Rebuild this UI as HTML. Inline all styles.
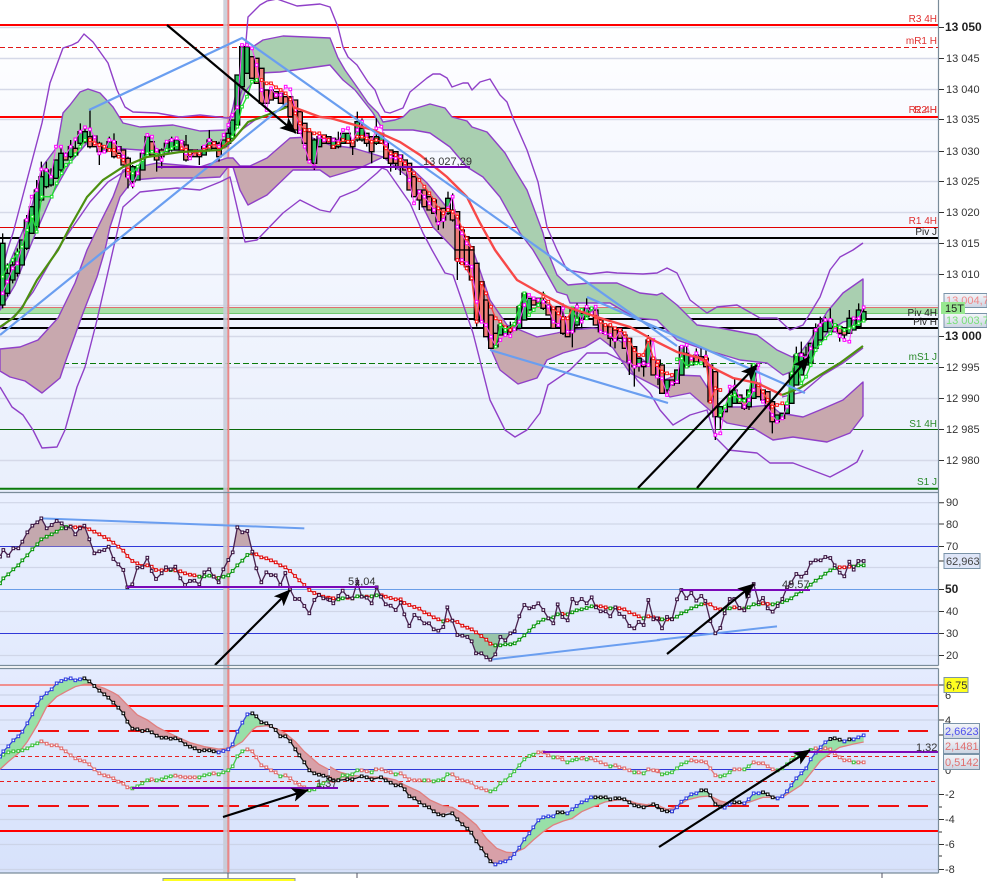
<!DOCTYPE html>
<html><head><meta charset="utf-8">
<style>
html,body{margin:0;padding:0;background:#fff}
svg{display:block;font-family:"Liberation Sans",sans-serif}
.s{fill:none;stroke-width:4;stroke-linejoin:round}
.k{stroke:#151515;marker:url(#mk)}
.b{stroke:#3a48d8;marker:url(#mb)}
.pk{stroke:#e47878;marker:url(#mp)}
.gg{stroke:#48c848;marker:url(#mg)}
.dk{stroke:#4a2450;marker:url(#md)}
.rd{stroke:#e01818;marker:url(#mr)}
.gn{stroke:#10a018;marker:url(#mn)}
.mg{stroke:#ff30ff;marker:url(#mm)}
.r1{stroke:#ff4040;marker:url(#mr1)}
.g1{stroke:#20e030;marker:url(#mg1)}
.w{fill:none;stroke:#000;stroke-width:4}
.cg{fill:#30c060;stroke:#000;stroke-width:4}
.cr{fill:#f07c78;stroke:#000;stroke-width:4}
.t{font-size:11px;fill:#333}
.tb{font-size:12px;font-weight:700;fill:#222}
.l{font-size:10px;text-anchor:end}
</style></head><body>
<svg width="987" height="881" viewBox="0 0 987 881" xmlns="http://www.w3.org/2000/svg">
<defs>
<linearGradient id="g1" x1="0" y1="0" x2="0" y2="1"><stop offset="0" stop-color="#fff"/><stop offset=".05" stop-color="#fff"/><stop offset=".3" stop-color="#f7f9ff"/><stop offset="1" stop-color="#e9effc"/></linearGradient>
<linearGradient id="g2" x1="0" y1="0" x2="0" y2="1"><stop offset="0" stop-color="#eaf0ff"/><stop offset="1" stop-color="#e2eafd"/></linearGradient>
<linearGradient id="g3" x1="0" y1="0" x2="0" y2="1"><stop offset="0" stop-color="#e4ebfe"/><stop offset="1" stop-color="#d7e2fb"/></linearGradient>
<linearGradient id="gb" x1="0" y1="0" x2="0" y2="1"><stop offset="0" stop-color="#f4f6fa"/><stop offset="1" stop-color="#ccd4e2"/></linearGradient>
<marker id="mk" markerUnits="userSpaceOnUse" markerWidth="12" markerHeight="12" refX="6" refY="6"><rect x="2" y="2" width="8" height="8" fill="#fff" stroke="#000" stroke-width="3"/></marker>
<marker id="mb" markerUnits="userSpaceOnUse" markerWidth="12" markerHeight="12" refX="6" refY="6"><rect x="2" y="2" width="8" height="8" fill="#fff" stroke="#2a38e0" stroke-width="3"/></marker>
<marker id="mp" markerUnits="userSpaceOnUse" markerWidth="12" markerHeight="12" refX="6" refY="6"><rect x="2" y="2" width="8" height="8" fill="#fff" stroke="#e06868" stroke-width="3"/></marker>
<marker id="mg" markerUnits="userSpaceOnUse" markerWidth="12" markerHeight="12" refX="6" refY="6"><rect x="2" y="2" width="8" height="8" fill="#fff" stroke="#38c038" stroke-width="3"/></marker>
<marker id="md" markerUnits="userSpaceOnUse" markerWidth="12" markerHeight="12" refX="6" refY="6"><rect x="2" y="2" width="8" height="8" fill="#fff" stroke="#300838" stroke-width="3"/></marker>
<marker id="mr" markerUnits="userSpaceOnUse" markerWidth="12" markerHeight="12" refX="6" refY="6"><rect x="2" y="2" width="8" height="8" fill="#fff" stroke="#e00000" stroke-width="3"/></marker>
<marker id="mn" markerUnits="userSpaceOnUse" markerWidth="12" markerHeight="12" refX="6" refY="6"><rect x="2" y="2" width="8" height="8" fill="#fff" stroke="#009000" stroke-width="3"/></marker>
<marker id="mm" markerUnits="userSpaceOnUse" markerWidth="12" markerHeight="12" refX="6" refY="6"><rect x="2" y="2" width="8" height="8" fill="#fff" stroke="#ff00ff" stroke-width="3"/></marker>
<marker id="mr1" markerUnits="userSpaceOnUse" markerWidth="12" markerHeight="12" refX="6" refY="6"><rect x="2" y="2" width="8" height="8" fill="#fff" stroke="#ff1010" stroke-width="3"/></marker>
<marker id="mg1" markerUnits="userSpaceOnUse" markerWidth="12" markerHeight="12" refX="6" refY="6"><rect x="2" y="2" width="8" height="8" fill="#fff" stroke="#10e020" stroke-width="3"/></marker>
<marker id="ah" markerUnits="userSpaceOnUse" markerWidth="18" markerHeight="14" refX="16" refY="7" orient="auto"><path d="M0 0L17 7L0 14L4 7z" fill="#000"/></marker>
<clipPath id="c1"><rect x="0" y="0" width="938" height="492"/></clipPath>
<clipPath id="c2"><rect x="0" y="493" width="938" height="172"/></clipPath>
<clipPath id="c3"><rect x="0" y="669" width="938" height="204"/></clipPath>
</defs>

<!-- panels -->
<rect x="0" y="0" width="938" height="492" fill="url(#g1)"/>
<rect x="0" y="493" width="938" height="172" fill="url(#g2)"/>
<rect x="0" y="669" width="938" height="204" fill="url(#g3)"/>

<!-- PANEL 1 -->
<g clip-path="url(#c1)">
<path d="M0 27.5H938M0 58.5H938M0 89.5H938M0 119.5H938M0 151.5H938M0 181.5H938M0 212.5H938M0 243.5H938M0 274.5H938M0 305.5H938M0 336.5H938M0 367.5H938M0 398.5H938M0 460.5H938" stroke="#d5d9e8" stroke-width="1.4" fill="none"/>
<rect x="0" y="308" width="938" height="5.5" fill="#a8e0a8"/>
<path d="M0 307.5H938" stroke="#e07070" stroke-width="1"/>
<path d="M0 313.5H938" stroke="#70c870" stroke-width="1"/>
<path d="M0 25H938" stroke="#ff0000" stroke-width="2"/>
<path d="M0 47.5H938" stroke="#e01818" stroke-width="1" stroke-dasharray="5 3"/>
<path d="M0 117H938" stroke="#ff0000" stroke-width="2"/>
<path d="M0 227.5H938" stroke="#e00000" stroke-width="1"/>
<path d="M0 238H938M0 319H938M0 328H938" stroke="#000" stroke-width="2"/>
<path d="M0 363.5H938" stroke="#0a7a0a" stroke-width="1" stroke-dasharray="6 3"/>
<path d="M0 429.5H938" stroke="#0a6a0a" stroke-width="1"/>
<path d="M0 488.7H938" stroke="#0a7a0a" stroke-width="2"/>
</g>

<!-- vertical marker -->
<rect x="223.3" y="0" width="4" height="873" fill="#c8ccd8" opacity=".9"/>
<rect x="227.3" y="0" width="2" height="873" fill="#e88888"/>

<g clip-path="url(#c1)">
<!-- bands -->
<polygon fill="#a9cfb0" stroke="#9040c8" stroke-width="1.4" stroke-linejoin="round" points="0,285 15,250 30,213 42,167 57,147 63,113 70,105 80,92 88,89 100,93 113,107 123,123 140,127 173,125 200,131 227,130 230,118 233,107 238,83 248,50 263,40 283,36 330,38 338,58 345,70 357,87 368,103 378,113 383,122 395,120 403,117 410,110 430,104 445,108 452,117 467,121 472,127 487,132 505,153 513,167 527,190 543,233 547,250 557,275 568,285 590,283 617,283 640,293 657,295 662,293 677,305 697,325 720,328 757,335 777,350 792,357 800,353 810,340 827,312 843,293 863,279 863,318 843,322 827,333 813,353 803,367 783,375 767,363 740,360 700,348 677,340 657,320 637,318 627,313 610,303 570,303 567,295 557,292 543,267 533,250 520,233 500,197 483,177 467,167 450,147 430,133 413,130 383,130 373,113 355,90 343,80 330,65 280,72 260,73 245,92 233,125 227,143 200,150 140,150 100,147 87,143 70,163 53,193 37,230 30,247 15,285 0,310"/>
<polygon fill="#c8a8ae" stroke="#9040c8" stroke-width="1.4" stroke-linejoin="round" points="0,349 20,347 38,340 58,318 75,283 87,250 100,223 113,197 123,170 157,163 200,167 227,158 233,158 240,166 250,166 267,158 290,138 310,137 330,145 353,148 383,157 410,167 427,183 457,220 473,250 490,300 507,325 520,330 537,337 557,333 570,330 593,328 607,330 627,347 647,363 664,380 677,375 700,376 720,407 750,407 770,405 780,413 803,417 820,410 843,400 863,382 863,416 850,433 827,442 793,437 773,440 753,428 727,423 713,413 690,393 670,397 657,387 630,373 613,348 600,338 585,347 563,353 547,360 537,378 518,384 500,370 490,347 473,280 455,250 433,227 408,177 383,157 360,168 330,177 320,170 293,170 267,195 248,205 240,190 233,167 228,167 220,177 200,178 157,178 133,180 120,197 110,227 105,250 97,277 83,313 65,363 60,378 42,393 25,381 10,377 0,371"/>
<!-- outer bands -->
<polyline fill="none" stroke="#9040c8" stroke-width="1.4" stroke-linejoin="round" points="0,278 8,248 13,233 42,123 50,83 63,48 72,45 78,42 84,34 93,42 108,63 117,90 125,107 133,112 157,113 180,117 200,115 227,118 233,117 242,90 248,17 260,5 267,1 277,-1 297,6 320,4 330,7 338,27 343,47 348,57 357,65 368,82 375,90 380,103 385,112 390,113 403,108 410,92 427,78 433,74 440,74 447,78 452,87 463,83 468,83 472,90 480,82 490,79 500,95 507,102 513,118 527,150 538,182 547,227 557,250 567,270 590,274 607,272 617,273 643,274 657,273 667,268 677,273 690,300 707,313 717,307 737,305 760,318 777,318 790,330 803,325 820,297 830,270 840,257 853,250 863,243"/>
<polyline fill="none" stroke="#9040c8" stroke-width="1.4" stroke-linejoin="round" points="0,387 12,407 23,415 33,430 42,448 57,447 65,430 77,387 85,367 97,320 113,250 123,207 140,192 177,188 200,190 220,182 230,177 237,207 245,242 257,240 283,213 300,200 320,210 330,212 340,197 357,190 377,173 382,168 387,170 410,203 423,233 432,250 445,273 453,275 473,333 490,400 505,430 515,437 527,430 540,413 548,385 570,370 587,353 607,353 627,363 637,380 650,393 660,410 673,425 690,415 707,410 715,437 728,450 757,453 770,463 793,463 830,477 847,468 857,462 863,450"/>
<polyline fill="none" stroke="#9040c8" stroke-width="1.4" stroke-linejoin="round" points="0,329 17,313 33,292 57,250 72,228 90,202 108,182 125,171" />
<polyline fill="none" stroke="#9040c8" stroke-width="1.4" stroke-linejoin="round" points="227,147 240,131 255,120 285,108" />
<polyline fill="none" stroke="#9040c8" stroke-width="1.4" stroke-linejoin="round" points="782,397 790,395 803,392 823,375 843,363 863,348" />
</g>

<g clip-path="url(#c1)">
<!-- candles tile 1 -->
<g transform="scale(.33333)">
<path class="w" d="M8 700V925M22 790V890M38 775V850M52 745V830M80 645V750M110 540V690M124 485V605M139 485V565M153 505V560M183 440V515M212 420V475M226 420V470M241 370V435M255 378V430M270 330V445M298 425V495M328 410V455M342 400V475M384 470V565M398 495V565M442 400V465M470 445V515M485 445V505M515 410V455M558 405V485M598 450V495M628 390V455M657 425V485M685 385V435M943 415V510"/>
<path class="cg" d="M1 730h14V915h-14zM15 820h14V880h-14zM31 795h14V840h-14zM45 760h14V820h-14zM59 720h14V795h-14zM73 660h14V745h-14zM88 620h14V700h-14zM103 570h14V680h-14zM117 530h14V600h-14zM132 510h14V560h-14zM146 530h14V555h-14zM161 480h14V535h-14zM176 460h14V510h-14zM205 440h14V470h-14zM234 395h14V430h-14zM248 395h14V425h-14zM306 440h14V455h-14zM321 425h14V450h-14zM391 500h14V545h-14zM406 500h14V540h-14zM421 460h14V510h-14zM435 410h14V460h-14zM493 430h14V455h-14zM508 420h14V450h-14zM523 420h14V450h-14zM605 440h14V465h-14zM621 420h14V450h-14zM664 420h14V440h-14zM678 400h14V430h-14zM690 360h14V415h-14zM705 225h14V375h-14zM719 140h14V260h-14zM734 140h14V220h-14zM936 420h14V490h-14zM951 410h14V440h-14z"/>
<path class="cr" d="M190 460h14V480h-14zM219 445h14V465h-14zM263 410h14V440h-14zM277 408h14V440h-14zM291 430h14V455h-14zM335 425h14V470h-14zM349 440h14V460h-14zM363 450h14V495h-14zM377 475h14V530h-14zM449 425h14V465h-14zM463 450h14V480h-14zM478 450h14V470h-14zM538 425h14V450h-14zM551 435h14V480h-14zM563 450h14V470h-14zM578 450h14V470h-14zM591 455h14V470h-14zM635 425h14V445h-14zM650 430h14V470h-14zM749 170h14V235h-14zM763 175h14V250h-14zM778 205h14V310h-14zM793 270h14V310h-14zM806 270h14V300h-14zM821 275h14V295h-14zM835 280h14V310h-14zM850 290h14V320h-14zM864 290h14V350h-14zM879 300h14V390h-14zM893 335h14V400h-14zM907 370h14V430h-14zM921 395h14V480h-14zM965 405h14V430h-14zM979 410h14V430h-14z"/>
<polyline fill="none" stroke="#ff40ff" stroke-width="3" style="marker:url(#mm)" points="8,880 22,845 38,805 52,790 66,740 80,660 95,590 110,570 124,508 139,510 153,530 168,440 183,440 197,465 212,440 226,418 241,395 255,382 270,388 284,412 298,460 313,455 328,420 342,425 356,445 370,470 384,530 398,555 413,520 428,455 442,405 456,410 470,450 485,480 500,425 515,420 530,415 545,425 558,460 570,475 585,455 598,460 612,440 628,420 642,430 657,440 671,405 685,375 697,345 712,322 726,135 741,135 756,145 770,195 785,270 800,330 813,265 828,285 842,285 857,260 871,268 886,330 900,395 914,440 928,485 943,500 958,410 972,420 986,420"/>
<polyline class="s g1" stroke-width="3" points="8,830 22,800 38,780 52,760 66,740 82,690 97,650 110,695 125,590 155,590 170,550 185,520 198,495 212,485 226,463 241,440 255,420"/>
<polyline class="s r1" points="270,420 284,430 298,435 313,440 328,450 342,450 356,470 370,480 384,510 398,520"/>
<polyline class="s g1" points="398,520 413,500 428,480 442,460 456,455 470,465 485,460 500,450 515,445 530,435"/>
<polyline class="s r1" points="545,445 558,450 570,460 585,455 598,460 612,450 628,440 642,430 657,450 671,440 685,420"/>
<polyline class="s g1" points="697,410 712,380 726,320 741,290 756,245 770,240"/>
<polyline class="s r1" points="785,240 800,250 813,250 828,262 842,270 857,280 871,298 886,340 900,370 914,390 928,390 943,400 958,400 972,410 986,420"/>
</g>
<!-- candles tile 2 -->
<g transform="translate(330,0) scale(.33333)">
<path class="w" d="M25 395V445M82 335V425M96 355V425M110 400V440M125 410V490M139 355V435M68 425V465M182 450V515M197 455V510M211 465V525M268 570V630M325 625V690M340 625V685M354 575V645M368 580V665"/>
<path class="cg" d="M3 415h14V445h-14zM18 420h14V440h-14zM32 400h14V430h-14zM47 400h14V430h-14zM75 365h14V420h-14zM89 385h14V420h-14zM132 410h14V430h-14zM147 400h14V430h-14zM347 595h14V640h-14z"/>
<path class="cr" d="M61 425h14V440h-14zM103 400h14V430h-14zM118 410h14V455h-14zM161 430h14V475h-14zM175 450h14V490h-14zM190 455h14V490h-14zM204 465h14V500h-14zM218 480h14V510h-14zM231 490h14V570h-14zM245 530h14V590h-14zM261 570h14V600h-14zM276 570h14V620h-14zM291 590h14V630h-14zM305 600h14V640h-14zM318 625h14V665h-14zM333 625h14V660h-14zM361 630h14V660h-14zM375 635h14V750h-14zM389 690h14V750h-14zM403 710h14V750h-14zM418 740h14V750h-14z"/>
<polyline fill="none" stroke="#ff40ff" stroke-width="3" style="marker:url(#mm)" points="10,420 25,425 39,390 54,385 68,425 82,390 96,365 110,410 125,425 139,385 154,380 168,430 182,470 197,475 211,470 225,490 238,540 252,610 268,575 283,590 298,610 312,630 325,670 340,660 354,625 368,590 382,680 396,700 410,730 425,745"/>
<polyline class="s r1" points="10,440 25,430 39,420 54,425 68,425 82,410 96,410 110,415 125,425 139,420 154,425 168,445 182,460 197,465 211,480 225,490 238,510 252,520 268,540 283,560 298,580 312,600 325,625 340,640 354,630 368,635 382,650 396,685 410,715 425,745"/>
</g>
<!-- candles tile 10 -->
<g transform="translate(330,250) scale(.33333)">
<path class="w" d="M382 0V90M440 40V230M541 215V250M640 125V180M699 160V255M727 175V292M741 160V230M755 190V235M770 145V205M841 230V290M855 240V295M898 265V375M913 290V410M927 325V365M941 335V380M955 255V350M984 330V405"/>
<path class="cg" d="M504 225h14V255h-14zM519 230h14V255h-14zM546 225h14V240h-14zM561 170h14V235h-14zM576 130h14V210h-14zM590 145h14V180h-14zM720 175h14V245h-14zM734 205h14V225h-14zM748 190h14V205h-14zM763 175h14V200h-14zM778 175h14V195h-14zM920 325h14V345h-14zM948 270h14V345h-14z"/>
<path class="cr" d="M375 0h14V30h-14zM389 0h14V40h-14zM403 0h14V50h-14zM418 0h14V90h-14zM433 40h14V210h-14zM448 95h14V215h-14zM461 150h14V260h-14zM476 195h14V295h-14zM490 250h14V290h-14zM534 235h14V245h-14zM604 150h14V165h-14zM618 145h14V160h-14zM633 155h14V175h-14zM648 165h14V195h-14zM663 175h14V235h-14zM678 170h14V225h-14zM692 200h14V250h-14zM706 205h14V260h-14zM790 180h14V225h-14zM805 210h14V245h-14zM819 225h14V250h-14zM834 230h14V265h-14zM848 240h14V270h-14zM863 240h14V265h-14zM877 255h14V295h-14zM891 265h14V335h-14zM906 290h14V350h-14zM934 335h14V350h-14zM963 325h14V375h-14zM977 330h14V380h-14z"/>
<polyline fill="none" stroke="#ff40ff" stroke-width="3" style="marker:url(#mm)" points="382,30 396,30 410,40 425,50 440,155 455,215 468,225 483,260 497,290 511,270 526,255 541,258 553,238 568,215 583,165 597,135 611,145 625,150 640,155 655,170 670,215 685,225 699,175 713,245 727,245 741,170 755,215 770,170 785,190 797,170 812,245 826,250 841,255 855,270 870,240 884,270 898,335 913,350 927,345 941,340 955,345 970,270 984,380"/>
<polyline class="s r1" points="382,30 396,40 410,55 425,85 440,215 455,100 468,130 483,170 497,205 511,215 526,232 541,240 553,222"/>
<polyline class="s g1" points="497,290 511,225 526,240 553,222 568,170 583,130 597,195 611,180 625,165 640,135"/>
<polyline class="s r1" points="640,140 655,155 670,175 685,190 699,205 713,205 727,175"/>
<polyline class="s g1" points="727,175 741,210 755,180 770,205 785,175"/>
<polyline class="s r1" points="797,200 812,215 826,225 841,225 855,235 870,240 884,250 898,270 913,300 927,315 940,315 955,270 970,325 984,335"/>
</g>
<!-- candles tile 3 -->
<g transform="translate(657,250) scale(.33333)">
<path class="w" d="M30 390V440M89 285V350M118 295V335M132 295V340M147 300V350M175 365V570M190 470V540M218 405V470M233 385V460M262 445V480M276 420V480M346 455V550M418 290V405M433 275V375M447 290V345M476 220V295M490 200V270M505 200V245M520 175V235M548 230V275M562 235V275M577 180V250M605 160V230M620 170V210"/>
<path class="cg" d="M23 390h14V420h-14zM53 360h14V400h-14zM67 290h14V375h-14zM82 310h14V350h-14zM183 470h14V500h-14zM197 470h14V485h-14zM211 440h14V470h-14zM226 420h14V460h-14zM269 420h14V470h-14zM283 345h14V445h-14zM353 495h14V515h-14zM369 490h14V505h-14zM383 465h14V490h-14zM397 370h14V460h-14zM411 315h14V405h-14zM426 310h14V375h-14zM440 315h14V345h-14zM454 280h14V340h-14zM469 240h14V295h-14zM483 225h14V270h-14zM498 210h14V245h-14zM513 210h14V235h-14zM570 205h14V250h-14zM583 210h14V240h-14zM598 180h14V230h-14zM613 185h14V210h-14z"/>
<path class="cr" d="M8 345h14V430h-14zM38 390h14V405h-14zM96 320h14V345h-14zM111 315h14V335h-14zM125 320h14V340h-14zM140 325h14V350h-14zM153 345h14V455h-14zM168 365h14V500h-14zM241 435h14V460h-14zM255 445h14V475h-14zM297 400h14V440h-14zM311 420h14V450h-14zM325 425h14V470h-14zM339 455h14V515h-14zM527 225h14V245h-14zM541 230h14V250h-14zM555 235h14V255h-14z"/>
<polyline fill="none" stroke="#ff40ff" stroke-width="3" style="marker:url(#mm)" points="0,380 15,385 30,435 45,400 60,395 74,290 89,285 103,325 118,310 132,335 147,320 160,350 175,555 190,550 204,475 218,410 233,410 248,445 262,470 276,450 290,420 304,345 318,455 332,470 346,495 360,515 376,505 390,470 404,370 418,315 433,315 447,325 461,295 476,240 490,225 505,210 520,210 534,240 548,258 562,270 577,275 590,205 605,205 620,172"/>
<polyline class="s r1" points="0,345 15,365 30,370 45,375"/>
<polyline class="s g1" points="60,328 74,325 89,350 103,340 118,340 132,340"/>
<polyline class="s r1" points="147,325 160,455 175,415 190,420"/>
<polyline class="s g1" points="190,495 204,470 218,440 233,435 248,450 262,452 276,430 290,345"/>
<polyline class="s r1" points="304,405 318,425 332,450 346,470 360,465 376,460"/>
<polyline class="s g1" points="390,460 404,370 418,315 433,400 447,380 461,345 476,300 490,280 505,265 520,250 534,225 548,232 562,240 577,235 590,230 605,220 620,212"/>
</g>
<!-- MAs -->
<polyline fill="none" stroke="#4c9010" stroke-width="2.2" points="0,327 13,318 22,308 37,280 58,250 70,227 87,197 103,180 123,167 147,157 180,152 220,150 233,140 248,122 267,115 287,107"/>
<polyline fill="none" stroke="#f84848" stroke-width="2.4" points="293,107 320,117 330,118 373,130 400,142 420,155 447,177 467,197 480,223 495,250 517,280 540,293 567,307 600,318 630,327 657,342 677,352 700,358 713,368 733,378 757,383 782,395"/>
<polyline fill="none" stroke="#4c9010" stroke-width="2.2" points="782,395 800,388 820,375 840,363 863,346"/>
<!-- Blue lines -->
<path fill="none" stroke="#6a9ef0" stroke-width="2.2" d="M0 335L287 103M89 110L242 38L677 346M587 297L805 393M490 350L668 403"/>
<!-- Purple -->
<path d="M157 167H470" stroke="#7a08b8" stroke-width="2" fill="none"/>
<text x="423" y="165" font-size="11" fill="#333">13 027,29</text>
<!-- Arrows -->
<line x1="167" y1="25" x2="296" y2="133" stroke="#000" stroke-width="2.2" marker-end="url(#ah)"/>
<line x1="638" y1="488" x2="757" y2="365" stroke="#000" stroke-width="2.2" marker-end="url(#ah)"/>
<line x1="697" y1="488" x2="809" y2="357" stroke="#000" stroke-width="2.2" marker-end="url(#ah)"/>
<!-- level labels -->
<text class="l" x="937" y="22" fill="#e03030">R3 4H</text>
<text class="l" x="937" y="44" fill="#e03030">mR1 H</text>
<text class="l" x="937" y="113" fill="#e03030">R2 4H</text>
<text class="l" x="937" y="113" fill="#e03030">R2 H</text>
<text class="l" x="937" y="224" fill="#e03030">R1 4H</text>
<text class="l" x="937" y="235" fill="#222">Piv J</text>
<text class="l" x="937" y="316" fill="#222">Piv 4H</text>
<text class="l" x="937" y="325" fill="#222">Piv H</text>
<text class="l" x="937" y="360" fill="#2a8a2a">mS1 J</text>
<text class="l" x="937" y="427" fill="#2a8a2a">S1 4H</text>
<text class="l" x="937" y="485" fill="#2a8a2a">S1 J</text>
</g>

<!-- PANEL 2 -->
<g clip-path="url(#c2)">
<path d="M0 502.7H938M0 524H938M0 567.5H938M0 611.5H938M0 655.5H938" stroke="#d0d6e8" stroke-width="1.2" fill="none"/>
<path d="M0 546.5H938M0 633.5H938" stroke="#3038d8" stroke-width="1" fill="none"/>
<path d="M0 589.5H938" stroke="#6a9ee8" stroke-width="1" fill="none"/>
<rect x="223.3" y="493" width="4" height="172" fill="#c8ccd8" opacity=".9"/>
<rect x="227.3" y="493" width="2" height="172" fill="#e88888"/>
<g transform="translate(0,490) scale(.33333)">
<polygon fill="#c4a8ae" points="60,169 67,155 82,127 97,107 112,97 124,85 140,115 155,105 170,93 185,100 198,115 212,110 226,133 240,115 253,107 268,148 274,169"/>
<polygon fill="#c4a8ae" points="700,169 712,112 727,127 742,123 752,169"/>
<path d="M124 85L913 115" stroke="#6a9ef0" stroke-width="6" fill="none"/>
<polyline class="s gn" points="0,280 10,265 25,253 40,238 55,226 67,211 82,196 97,178 112,163 124,148 140,140 155,133 170,125 185,115 198,111 212,109"/>
<polyline class="s rd" points="212,109 226,112 240,112 253,110 268,118 283,125 298,133 313,141 326,148 340,158 355,170 370,182 382,198 397,213 412,220 427,228 442,226 455,230 468,240 485,241 498,240 512,240"/>
<polyline class="s gn" points="512,240 526,241"/>
<polyline class="s rd" points="526,241 541,244 555,250 570,254 583,256 598,260"/>
<polyline class="s gn" points="598,260 613,259 628,257 641,259"/>
<polyline class="s rd" points="641,259 656,264"/>
<polyline class="s gn" points="656,264 670,260 685,256 698,243 712,226 727,212 742,195 757,190"/>
<polyline class="s rd" points="757,190 769,193 784,202 799,205 813,211 827,217 841,226 856,232 870,243 885,258 898,271 913,285 928,300 943,309 957,314 970,320 985,323"/>
<polyline class="s dk" points="0,200 10,180 25,197 40,175 55,175 67,155 82,127 97,107 112,97 124,85 140,115 155,105 170,93 185,100 198,115 212,110 226,133 240,115 253,107 268,148 283,190 298,184 313,180 326,170 340,207 355,223 370,240 382,292 397,283 412,233 427,232 442,203 455,243 468,267 485,250 498,232 512,238 526,230 541,265 555,285 570,273 583,272 598,283 613,247 628,238 641,260 656,277 670,238 685,210 698,187 712,112 727,127 742,123 757,185 769,235 784,277 799,247 813,255 827,256 841,285 856,249 870,298 885,327 898,327 913,348 928,370 943,330 957,315 970,325 985,328"/>
</g>
<g transform="translate(330,490) scale(.33333)">
<polygon fill="#98c4a8" points="382,430 382,435 397,437 412,441 425,454 438,490 454,490 469,502 481,509 496,493 511,441 526,451 541,430"/>
<path d="M481 509L990 450" stroke="#6a9ef0" stroke-width="6" fill="none"/>
<polyline class="s rd" points="0,325 10,325 25,328"/>
<polyline class="s gn" points="25,328 38,325 53,323"/>
<polyline class="s rd" points="53,323 67,325"/>
<polyline class="s gn" points="67,325 82,319 95,319 110,320"/>
<polyline class="s rd" points="110,320 125,319"/>
<polyline class="s gn" points="125,319 140,316 155,316"/>
<polyline class="s rd" points="155,316 167,320 182,324 197,328 212,328 223,339 238,345 253,351 268,356 283,367 297,373 311,382 325,388 340,394"/>
<polyline class="s gn" points="340,394 352,391"/>
<polyline class="s rd" points="352,391 367,392 382,396 397,407 412,413 425,418 438,427 454,438 469,449 481,461 496,466"/>
<polyline class="s gn" points="496,466 511,466 526,463 541,463 554,460 568,449 583,436 598,422 611,409 625,397 640,389 655,385 670,382 683,373 697,372"/>
<polyline class="s rd" points="697,372 713,373"/>
<polyline class="s gn" points="713,373 727,367 740,361 755,358 770,354 785,349 798,349"/>
<polyline class="s rd" points="798,349 812,349 827,352 841,355"/>
<polyline class="s gn" points="841,355 856,352"/>
<polyline class="s rd" points="856,352 868,355 883,358 898,367 913,373 926,379 941,385"/>
<polyline class="s gn" points="941,385 955,379"/>
<polyline class="s rd" points="955,379 970,382 985,385"/>
<polyline class="s dk" points="0,330 10,340 25,318 38,302 52,320 67,325 82,275 95,320 110,323 125,340 140,292 153,320 167,343 182,347 197,360 212,338 223,373 238,408 253,375 268,385 283,400 297,400 311,418 325,422 340,411 352,352 367,392 382,435 397,437 412,441 425,454 438,490 454,490 469,502 481,509 496,493 511,441 526,451 541,430 554,424 568,379 583,345 598,355 611,351 625,340 640,360 655,385 670,400 683,343 697,381 713,391 727,327 740,340 755,327 770,340 785,322 798,352 812,364 827,364 841,379 856,352 868,372 883,380 898,408 913,415 926,396 941,405 955,330 970,388 985,388"/>
</g>
<g transform="translate(657,490) scale(.33333)">
<path d="M0 450L360 409" stroke="#6a9ef0" stroke-width="6" fill="none"/>
<polyline class="s rd" points="0,385 15,388"/>
<polyline class="s gn" points="15,388 30,388"/>
<polyline class="s rd" points="30,388 45,387"/>
<polyline class="s gn" points="45,387 60,380 73,370 88,364 103,355 118,349 133,343 145,340"/>
<polyline class="s rd" points="145,340 160,343 175,355 190,358 203,361"/>
<polyline class="s gn" points="203,361 218,355 232,352"/>
<polyline class="s rd" points="232,352 247,355 262,356"/>
<polyline class="s gn" points="262,356 275,352 290,343 305,343 318,340"/>
<polyline class="s rd" points="318,340 332,342 347,343"/>
<polyline class="s gn" points="347,343 362,340 376,336 390,331 403,325 418,313 433,304 448,295 461,284 476,272 491,262 505,251 520,241 533,234 548,232"/>
<polyline class="s rd" points="548,232 562,232 577,230 590,230"/>
<polyline class="s gn" points="590,230 604,226 620,226"/>
<polyline class="s dk" points="0,385 15,415 30,381 45,388 60,328 73,300 88,325 103,309 118,332 133,318 145,333 160,393 175,430 190,414 203,370 218,327 232,327 247,354 262,361 275,318 290,282 305,337 318,324 332,355 347,365 362,348 376,327 390,292 403,277 418,252 433,260 448,249 461,218 476,211 491,211 505,201 520,204 533,226 548,248 562,259 577,215 590,239 604,213 620,213"/>
</g>
<path d="M127 587H378M681 590H810" stroke="#7a08b8" stroke-width="2" fill="none"/>
<text x="348" y="585" font-size="11" fill="#333">51,04</text>
<text x="782" y="588" font-size="11" fill="#333">49,57</text>
<line x1="215" y1="665" x2="290" y2="590" stroke="#000" stroke-width="2.2" marker-end="url(#ah)"/>
<line x1="667" y1="654" x2="754" y2="584" stroke="#000" stroke-width="2.2" marker-end="url(#ah)"/>
</g>

<!-- PANEL 3 -->
<g clip-path="url(#c3)">
<path d="M0 695H938M0 720H938M0 744.5H938M0 794.5H938M0 819.5H938M0 844.5H938M0 869.5H938" stroke="#ccd4e8" stroke-width="1.2" fill="none"/>
<path d="M0 685H938" stroke="#f09090" stroke-width="2"/>
<path d="M0 706H938M0 831H938" stroke="#ff0000" stroke-width="2"/>
<path d="M8 731H928M8 806H928" stroke="#f01010" stroke-width="2" stroke-dasharray="21 9"/>
<path d="M0 756.5H938M0 781.5H938" stroke="#e82020" stroke-width="1" stroke-dasharray="4 3"/>
<path d="M0 769.5H938" stroke="#3038d8" stroke-width="1"/>
<rect x="223.3" y="669" width="4" height="204" fill="#c8ccd8" opacity=".9"/>
<rect x="227.3" y="669" width="2" height="204" fill="#e88888"/>
<g transform="translate(0,670) scale(.33333)">
<polygon fill="#98e0a8" points="0,260 10,244 25,229 40,211 55,199 67,185 82,160 97,133 112,105 124,83 140,70 155,58 170,40 184,33 197,28 212,25 226,31 240,28 253,25 268,34 268,43 253,43 226,50 197,65 170,80 140,110 112,165 82,215 55,250 25,275 0,298"/>
<polygon fill="#d8a0a8" points="268,34 283,48 298,62 313,73 325,83 340,98 355,113 370,130 382,155 397,176 412,178 427,183 442,181 455,187 470,197 485,203 498,203 512,206 526,205 541,211 556,223 570,230 584,235 598,243 613,241 628,241 641,244 656,247 670,243 685,238 656,237 613,230 570,218 541,205 498,185 470,170 442,150 412,135 382,105 355,77 340,68 313,55 283,45 268,43"/>
<polygon fill="#98e0a8" points="685,238 698,223 712,185 727,158 742,133 757,130 769,139 784,157 799,165 770,170 757,180 727,215 698,232"/>
<polygon fill="#d8a0a8" points="799,160 813,168 827,180 841,199 856,199 871,214 886,238 898,256 913,277 928,301 943,310 957,314 970,317 985,322 985,298 957,283 913,245 886,215 856,190 827,175 800,167"/>
<polyline fill="none" stroke="#e08080" stroke-width="4" points="0,298 25,275 55,250 82,215 112,165 140,110 170,80 197,65 226,50 253,43 268,43 283,45 313,55 340,68 355,77 382,105 412,135 442,150 470,170 498,185 541,205 570,218 613,230 656,237 685,235 698,232 727,215 757,180 770,170 800,167 827,175 856,190 886,215 913,245 957,283 985,298"/>
<polyline class="s gg" points="0,260 10,254 25,247 40,244 55,243 67,241 82,235 97,226 112,220 124,214"/>
<polyline class="s pk" points="124,214 140,221 155,226 170,226 184,235 197,244 212,256 226,265 240,271 253,274 268,283 283,298 298,310 313,316 325,319 340,325 355,335 370,341 382,352 397,355"/>
<polyline class="s gg" points="397,355 412,349 427,340 442,331 455,328"/>
<polyline class="s pk" points="455,328 470,331"/>
<polyline class="s gg" points="470,331 485,328 498,322 512,319 526,317"/>
<polyline class="s pk" points="526,317 541,320 556,322 570,322 584,322 598,322"/>
<polyline class="s gg" points="598,322 613,316 628,313 641,310"/>
<polyline class="s pk" points="641,310 656,313"/>
<polyline class="s gg" points="656,313 670,307 685,301 698,289 712,259 727,244 742,238"/>
<polyline class="s pk" points="742,238 757,244 769,262 784,286 799,292 813,301 827,307 841,319"/>
<polyline class="s gg" points="841,319 856,316"/>
<polyline class="s pk" points="856,316 871,325 886,338 898,344 913,352 928,361"/>
<polyline class="s gg" points="928,361 943,358 957,345 970,340 985,331"/>
<polyline class="s b" points="0,260 10,244 25,229 40,211 55,199 67,185 82,160 97,133 112,105 124,83 140,70 155,58 170,40 184,33 197,28 212,25 226,31 240,28 253,25"/>
<polyline class="s k" points="253,25 268,34 283,48 298,62 313,73 325,83 340,98 355,113 370,130 382,155 397,176 412,178 427,183 442,181 455,187 470,197 485,203 498,203 512,206 526,205 541,211 556,223 570,230 584,235 598,243 613,241 628,241 641,244 656,247"/>
<polyline class="s b" points="656,247 670,243 685,238 698,223 712,185 727,158 742,133 757,130"/>
<polyline class="s k" points="757,130 769,139 784,157 799,160 813,168 827,180 841,199 856,199 871,214 886,238 898,256 913,277 928,301 943,310 957,314 970,317 985,322"/>
</g>
<g transform="translate(330,670) scale(.33333)">
<polygon fill="#d8a0a8" points="0,290 25,305 60,315 100,320 160,322 197,330 224,345 268,365 300,390 340,408 367,412 397,430 439,465 469,505 500,535 530,547 553,552 541,565 526,574 511,577 496,583 481,574 469,556 454,535 439,514 424,488 412,476 397,463 382,448 367,430 352,427 340,436 325,433 311,424 297,412 283,406 268,397 253,385 238,379 224,358 212,346 197,346 182,338 167,331 153,322 138,322 125,328 110,322 95,319 82,319 67,328 52,328 38,325 25,331 10,331 0,327"/>
<polygon fill="#98e0a8" points="553,552 568,533 583,508 598,490 610,472 625,451 640,442 655,439 670,439 683,427 697,427 712,430 727,418 740,408 755,397 770,391 783,382 796,382 812,382 827,382 841,388 825,396 790,410 755,425 727,445 700,453 670,465 640,485 610,510 583,535 553,548"/>
<polygon fill="#d8a0a8" points="860,387 868,385 883,388 898,397 913,406 926,409 941,412 955,400 970,403 985,412 985,408 955,405 920,400 883,388"/>
<polyline fill="none" stroke="#e08080" stroke-width="4" points="0,290 25,305 60,315 100,320 160,322 197,330 224,345 268,365 300,390 340,408 367,412 397,430 439,465 469,505 500,535 530,547 553,548 583,535 610,510 640,485 670,465 700,453 727,445 755,425 790,410 825,396 860,390 883,388 920,400 955,405 985,408"/>
<polyline class="s pk" points="0,325 10,333 25,330"/>
<polyline class="s gg" points="25,330 38,316 52,316 67,313 82,301 95,301"/>
<polyline class="s pk" points="95,301 110,304 125,307"/>
<polyline class="s gg" points="125,307 138,298"/>
<polyline class="s pk" points="138,298 155,298 167,304 182,307 197,313"/>
<polyline class="s gg" points="197,313 212,310"/>
<polyline class="s pk" points="212,310 224,319 238,328 253,331 268,331 283,331"/>
<polyline class="s gg" points="283,331 295,331"/>
<polyline class="s pk" points="295,331 311,334"/>
<polyline class="s gg" points="311,334 325,331 340,328 352,313 367,313"/>
<polyline class="s pk" points="367,313 382,325 397,331 412,334 424,338 439,352 454,355 469,361 481,364"/>
<polyline class="s gg" points="481,364 496,358 511,340 526,331 541,316 553,304 568,286 583,268 598,258 610,254 625,247"/>
<polyline class="s pk" points="625,247 640,247 655,256 670,262"/>
<polyline class="s gg" points="670,262 683,262"/>
<polyline class="s pk" points="683,262 697,268 712,277"/>
<polyline class="s gg" points="712,277 727,271 740,268 755,265"/>
<polyline class="s pk" points="755,265 770,268"/>
<polyline class="s gg" points="770,268 783,265"/>
<polyline class="s pk" points="783,265 796,271 812,277 827,283 841,289"/>
<polyline class="s gg" points="841,289 856,286"/>
<polyline class="s pk" points="856,286 868,292 883,295 898,301 913,307"/>
<polyline class="s gg" points="913,307 926,307"/>
<polyline class="s pk" points="926,307 941,310"/>
<polyline class="s gg" points="941,310 955,298"/>
<polyline class="s pk" points="955,298 970,301 985,304"/>
<polyline class="s k" points="0,327 10,331 25,331 52,328 67,328 95,319 110,322 125,328 153,322 167,331 182,338 197,346 212,346 224,358 238,379 253,385 268,397 283,406 297,412 311,424 325,433 340,436 367,430 382,448 397,463 412,476 424,488 439,514 454,535 469,556 481,574 496,583"/>
<polyline class="s b" points="496,583 511,577 526,574 541,565 553,552 568,533 583,508 598,490 610,472 625,451 640,442 655,439 670,439 683,427"/>
<polyline class="s k" points="683,427 697,427 712,430"/>
<polyline class="s b" points="712,430 727,418 740,408 755,397 770,391 783,382 796,382"/>
<polyline class="s k" points="796,382 812,382 827,382 841,388"/>
<polyline class="s k" points="856,385 868,385 883,388 898,397 913,406 926,409 941,412 970,403 985,412"/>
</g>
<g transform="translate(657,670) scale(.33333)">
<polygon fill="#d8a0a8" points="0,408 15,420 30,424 45,424 60,412 30,418 0,405"/>
<polygon fill="#98e0a8" points="60,412 73,395 88,385 103,373 118,370 133,361 147,361 160,376 130,380 90,390"/>
<polygon fill="#d8a0a8" points="160,376 175,403 190,410 203,413 218,403 232,403 190,393"/>
<polygon fill="#98e0a8" points="275,388 290,370 305,370 318,367 332,373 318,382 275,397"/>
<polygon fill="#98e0a8" points="376,379 390,364 403,346 418,325 433,310 448,295 461,268 476,248 491,232 505,217 520,207 533,205 548,209 562,214 577,208 590,208 604,202 620,196 620,216 590,222 548,232 520,250 491,272 461,310 433,345 376,382"/>
<polyline fill="none" stroke="#e08080" stroke-width="4" points="0,405 30,418 60,410 90,390 130,380 160,378 190,393 232,403 275,397 318,382 376,382 433,345 461,310 491,272 520,250 548,232 590,222 620,216"/>
<polyline class="s pk" points="0,302 15,313"/>
<polyline class="s gg" points="15,313 30,310 45,307 60,295 73,283 88,277 103,271"/>
<polyline class="s pk" points="103,271 118,274 133,274 147,277 160,295 175,316 190,319"/>
<polyline class="s gg" points="190,319 203,316 218,307 232,298"/>
<polyline class="s pk" points="232,298 247,298 262,298"/>
<polyline class="s gg" points="262,298 275,289 290,277"/>
<polyline class="s pk" points="290,277 305,280 318,280 332,289 347,298 362,301"/>
<polyline class="s gg" points="362,301 376,295 390,283 403,271 418,259 433,256 448,247 461,240 476,235"/>
<polyline class="s pk" points="476,235 491,238 505,235 520,238 533,250 548,262 562,271 577,271 590,277"/>
<polyline class="s gg" points="590,277 604,277"/>
<polyline class="s pk" points="604,277 620,277"/>
<polyline class="s k" points="0,408 15,420 30,424 45,424"/>
<polyline class="s b" points="45,424 60,412 73,395 88,385 103,373 118,370 133,361"/>
<polyline class="s k" points="133,361 147,361 160,376 175,403 190,410 203,413"/>
<polyline class="s b" points="203,413 218,403 232,397"/>
<polyline class="s k" points="232,397 247,397 262,400"/>
<polyline class="s b" points="262,400 275,388 290,370 305,370 318,367"/>
<polyline class="s k" points="318,367 332,373 347,382 362,385"/>
<polyline class="s b" points="362,385 376,379 390,364 403,346 418,325 433,310 448,295 461,268 476,248 491,232 505,217 520,207"/>
<polyline class="s k" points="520,207 533,205 548,209 562,214"/>
<polyline class="s b" points="562,214 577,208"/>
<polyline class="s k" points="577,208 590,208"/>
<polyline class="s b" points="590,208 604,202 620,196"/>
</g>
<path d="M132 788H338M543 752H938" stroke="#7a08b8" stroke-width="2" fill="none"/>
<text x="316" y="787" font-size="11" fill="#333">1,37</text>
<text x="916" y="751" font-size="11" fill="#333">1,32</text>
<line x1="223" y1="817" x2="308" y2="790" stroke="#000" stroke-width="2.2" marker-end="url(#ah)"/>
<line x1="659" y1="847" x2="810" y2="750" stroke="#000" stroke-width="2.2" marker-end="url(#ah)"/>
</g>

<!-- Panel borders -->
<path d="M0 492.5H938.5M0 665.5H938.5M0 668.5H938.5M0 873H938.5M938.5 0V492.5M938.5 492.5V665.5M938.5 668.5V873" stroke="#7a8c9a" stroke-width="1.2" fill="none"/>

<!-- ticks -->
<path d="M939 27.5h5M939 58.5h5M939 89.5h5M939 119.5h5M939 151.5h5M939 181.5h5M939 212.5h5M939 243.5h5M939 274.5h5M939 336.5h5M939 367.5h5M939 398.5h5M939 429.5h5M939 460.5h5M939 502.7h5M939 524h5M939 546.5h5M939 561h5M939 589.5h5M939 611.5h5M939 633.5h5M939 655.5h5M939 685h5M939 720h5M939 735h4M939 794.5h5M939 819.5h5M939 844.5h5M939 869.5h5M939 807h3M939 832h3M939 856h3" stroke="#333" stroke-width="1" fill="none"/>
<path d="M228 873v5M357 873v5M882 873v5" stroke="#556" stroke-width="1"/>

<!-- axis text -->
<text class="tb" x="945" y="31">13 050</text>
<text class="t" x="946" y="62">13 045</text>
<text class="t" x="946" y="93">13 040</text>
<text class="t" x="946" y="123">13 035</text>
<text class="t" x="946" y="155">13 030</text>
<text class="t" x="946" y="185">13 025</text>
<text class="t" x="946" y="216">13 020</text>
<text class="t" x="946" y="247">13 015</text>
<text class="t" x="946" y="278">13 010</text>
<text class="tb" x="945" y="340">13 000</text>
<text class="t" x="946" y="371">12 995</text>
<text class="t" x="946" y="402">12 990</text>
<text class="t" x="946" y="433">12 985</text>
<text class="t" x="946" y="464">12 980</text>
<text class="t" x="946" y="506">90</text>
<text class="t" x="946" y="528">80</text>
<text class="t" x="946" y="550">70</text>
<text class="tb" x="945" y="593">50</text>
<text class="t" x="946" y="615">40</text>
<text class="t" x="946" y="637">30</text>
<text class="t" x="946" y="659">20</text>
<text class="t" x="945" y="699">6</text>
<text class="t" x="945" y="724">4</text>
<text class="t" x="945" y="774">0</text>
<text class="t" x="945" y="798">-2</text>
<text class="t" x="945" y="823">-4</text>
<text class="t" x="945" y="848">-6</text>
<text class="t" x="945" y="873">-8</text>

<!-- value boxes -->
<rect x="944" y="293.5" width="43" height="14" fill="url(#gb)" stroke="#7a93a8"/>
<text x="946" y="304" font-size="11" fill="#f08888">13 004,7</text>
<rect x="944" y="313.5" width="43" height="14" fill="url(#gb)" stroke="#7a93a8"/>
<text x="946" y="324" font-size="11" fill="#78e078">13 003,7</text>
<rect x="941" y="302" width="24" height="12" fill="#98e890"/>
<text x="945" y="312" font-size="11" fill="#222">15T</text>
<rect x="944" y="553.5" width="36" height="15" fill="#dfe6f8" stroke="#7a93a8"/>
<text x="946" y="565" font-size="11" fill="#444">62,963</text>
<rect x="944" y="677.5" width="24" height="15" fill="#ffff20" stroke="#7a93a8"/>
<text x="946" y="689" font-size="11" fill="#333">6,75</text>
<rect x="943.5" y="723.5" width="36" height="15" fill="url(#gb)" stroke="#7a93a8"/>
<text x="945" y="735" font-size="11" fill="#5050ee">2,6623</text>
<rect x="943.5" y="738.5" width="36" height="15" fill="url(#gb)" stroke="#7a93a8"/>
<text x="945" y="750" font-size="11" fill="#e07070">2,1481</text>
<rect x="943.5" y="754.5" width="36" height="15" fill="url(#gb)" stroke="#7a93a8"/>
<text x="945" y="766" font-size="11" fill="#e07070">0,5142</text>

<!-- bottom yellow label -->
<rect x="163" y="878.5" width="132" height="5" fill="#ffff20" stroke="#8a9aaa"/>
</svg>
</body></html>
